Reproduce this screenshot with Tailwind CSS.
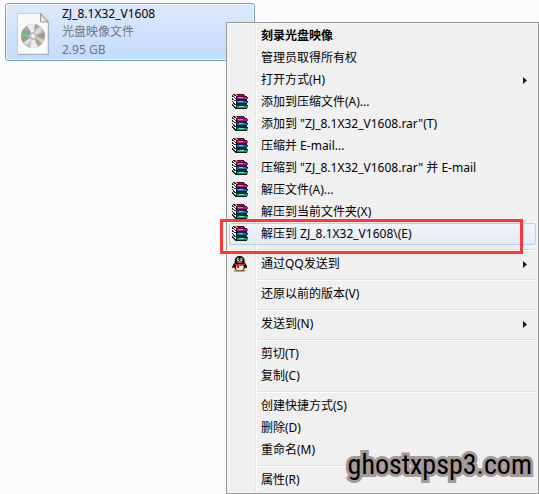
<!DOCTYPE html>
<html lang="zh-CN">
<head>
    <meta charset="UTF-8">
    <meta name="viewport" content="width=device-width, initial-scale=1.0">
    <title>ZJ_8.1X32_V1608</title>
    <script src="https://cdn.jsdelivr.net/npm/@tailwindcss/browser@4"></script>
</head>
<body class="relative min-h-screen overflow-hidden bg-[#fcfcfc] font-['Noto_Sans','Noto_Sans_CJK_SC',sans-serif] text-xs text-black">
    <!-- shared icons -->
    <svg class="hidden" xmlns="http://www.w3.org/2000/svg">
        <symbol id="rar" viewBox="0 0 16 16" shape-rendering="crispEdges">
            <!-- page edges -->
            <path fill="#fff" d="M0 1h5v14H4l-4-3z"/>
            <path fill="#222" d="M0 1h1v1h1v1h1v1h1v1H3V4H2V3H0zM0 4h1v1h1v1h2v1H2V6H0zM0 7h1v1h1v1h1v1h1v1H2v-1H1V8H0zM0 10h1v1h1v1h1v1h1v2H3v-1H2v-1H1v-1H0z"/>
            <!-- top book -->
            <path fill="#5c0038" d="M1 0h11v1h1v1h2v1H4V2H2V1H1z"/>
            <path fill="#8c1260" d="M5 1h7v1H5z"/>
            <path fill="#b8a800" d="M3 0h2v1h1v1H4V1H3z"/>
            <path fill="#b8127c" d="M5 3h11v2H5z"/>
            <path fill="#e878bc" d="M6 3h5v1H6z"/>
            <path fill="#300020" d="M4 3h1v2h10v1H4z"/>
            <!-- middle book -->
            <path fill="#0a2050" d="M4 6h11v1h1v1H4z"/>
            <path fill="#1670b8" d="M5 8h11v1H5zM5 7h9v1H5z"/>
            <path fill="#7cc4ec" d="M7 7h4v1H7z"/>
            <path fill="#06163c" d="M4 8h1v1h10v1H4z"/>
            <!-- bottom book -->
            <path fill="#053024" d="M4 10h11v1h1v1H4z"/>
            <path fill="#12946c" d="M5 12h11v2H5z"/>
            <path fill="#7ce0c0" d="M7 12h5v1H7z"/>
            <path fill="#042018" d="M4 12h1v2h10v1H4z"/>
        </symbol>
        <symbol id="arrow" viewBox="0 0 4 7">
            <path fill="#1a1a1a" d="M0 0l4 3.5L0 7z"/>
        </symbol>
    </svg>

    <a href="#" class="mt-[3px] ml-[5px] flex h-[58px] w-[250px] rounded-[3px] border border-[#7da2ce] bg-linear-to-b from-[#dce9fb] to-[#c1dbfc] inset-ring inset-ring-white/50">
        <svg class="mt-[9px] ml-[11px] h-[42px] w-8" viewBox="0 0 32 42" xmlns="http://www.w3.org/2000/svg">
            <defs>
                <linearGradient id="disc" x1="0" y1="0" x2="1" y2="1">
                    <stop offset="0" stop-color="#bbb"/>
                    <stop offset=".35" stop-color="#999"/>
                    <stop offset=".5" stop-color="#e8e8e8"/>
                    <stop offset=".7" stop-color="#999"/>
                    <stop offset="1" stop-color="#ccc"/>
                </linearGradient>
            </defs>
            <path fill="#8d949c" opacity=".6" d="M1 1h24l7 8v33H1z"/>
            <path fill="#fafafa" stroke="#b8b8b8" stroke-width=".6" d="M.5.5h23l7.500 8.500v32H.5z"/>
            <path fill="#e4e4e4" stroke="#888" stroke-width=".8" d="M23.500.5V9H31z"/>
            <circle cx="16" cy="23" r="11.700" fill="url(#disc)" stroke="#999" stroke-width=".6"/>
            <path fill="#eee" d="M16 23L10 12.600A12 12 0 0 1 18 11.200zM16 23l5 11a12 12 0 0 1-8 .6z"/>
            <path fill="#5fe52c" d="M16 23L4.500 19.500 4 23.500z" opacity=".8"/>
            <path fill="#30b8c8" d="M16 23L4.500 20 6.500 16z" opacity=".45"/>
            <path fill="#a88ba0" d="M16 23L4.200 25 6 29.500zM16 23l11.500-3.500.5 4z" opacity=".8"/>
            <path fill="#f0e58a" d="M16 23l11.500 4-2 3.500z" opacity=".8"/>
            <circle cx="16" cy="23" r="3.500" fill="#d5d5d5" stroke="#999" stroke-width=".6"/>
            <circle cx="16" cy="23" r="1.300" fill="#fff"/>
        </svg>
        <div class="mt-px ml-[13px] leading-[18px] text-[#6d7683]">
            <p class="text-black">ZJ_8.1X32_V1608</p>
            <p>光盘映像文件</p>
            <p>2.95 GB</p>
        </div>
    </a>

    <div role="menu" class="absolute top-[22px] right-0 left-[226px] border border-[#979797] bg-[#f0f0f0] p-0.5 inset-ring inset-ring-[#f6f6f6]">
        <button role="menuitem" class="flex h-[22px] w-full text-left leading-[22px]">
            <span class="w-[26px]"></span>
            <span class="flex-1 border-l border-[#e2e3e3] pl-[5px] font-bold inset-shadow-[1px_0_0_white]">刻录光盘映像</span>
        </button>
        <button role="menuitem" class="flex h-[22px] w-full text-left leading-[22px]">
            <span class="w-[26px]"></span>
            <span class="flex-1 border-l border-[#e2e3e3] pl-[5px] inset-shadow-[1px_0_0_white]">管理员取得所有权</span>
        </button>
        <button role="menuitem" aria-haspopup="true" class="flex h-[22px] w-full text-left leading-[22px]">
            <span class="w-[26px]"></span>
            <span class="flex flex-1 items-center justify-between border-l border-[#e2e3e3] pr-[9px] pl-[5px] inset-shadow-[1px_0_0_white]">打开方式(H)<svg class="h-[7px] w-1"><use href="#arrow"/></svg></span>
        </button>
        <button role="menuitem" class="flex h-[22px] w-full text-left leading-[22px]">
            <span class="w-[26px] pt-[3px] pl-[3px]"><svg class="size-4"><use href="#rar"/></svg></span>
            <span class="flex-1 border-l border-[#e2e3e3] pl-[5px] inset-shadow-[1px_0_0_white]">添加到压缩文件(A)...</span>
        </button>
        <button role="menuitem" class="flex h-[22px] w-full text-left leading-[22px]">
            <span class="w-[26px] pt-[3px] pl-[3px]"><svg class="size-4"><use href="#rar"/></svg></span>
            <span class="flex-1 border-l border-[#e2e3e3] pl-[5px] inset-shadow-[1px_0_0_white]">添加到 "ZJ_8.1X32_V1608.rar"(T)</span>
        </button>
        <button role="menuitem" class="flex h-[22px] w-full text-left leading-[22px]">
            <span class="w-[26px] pt-[3px] pl-[3px]"><svg class="size-4"><use href="#rar"/></svg></span>
            <span class="flex-1 border-l border-[#e2e3e3] pl-[5px] inset-shadow-[1px_0_0_white]">压缩并 E-mail...</span>
        </button>
        <button role="menuitem" class="flex h-[22px] w-full text-left leading-[22px]">
            <span class="w-[26px] pt-[3px] pl-[3px]"><svg class="size-4"><use href="#rar"/></svg></span>
            <span class="flex-1 border-l border-[#e2e3e3] pl-[5px] inset-shadow-[1px_0_0_white]">压缩到 "ZJ_8.1X32_V1608.rar" 并 E-mail</span>
        </button>
        <button role="menuitem" class="flex h-[22px] w-full text-left leading-[22px]">
            <span class="w-[26px] pt-[3px] pl-[3px]"><svg class="size-4"><use href="#rar"/></svg></span>
            <span class="flex-1 border-l border-[#e2e3e3] pl-[5px] inset-shadow-[1px_0_0_white]">解压文件(A)...</span>
        </button>
        <button role="menuitem" class="flex h-[22px] w-full text-left leading-[22px]">
            <span class="w-[26px] pt-[3px] pl-[3px]"><svg class="size-4"><use href="#rar"/></svg></span>
            <span class="flex-1 border-l border-[#e2e3e3] pl-[5px] inset-shadow-[1px_0_0_white]">解压到当前文件夹(X)</span>
        </button>
        <!-- highlighted item, framed in red -->
        <button role="menuitem" class="relative flex h-[22px] w-full rounded-[3px] bg-linear-to-b from-[#f2f4f8] to-[#e4ebf6] text-left leading-[22px] inset-ring inset-ring-[#aecff7]">
            <span class="w-[27px] pt-[3px] pl-[3px]"><svg class="size-4"><use href="#rar"/></svg></span>
            <span class="flex-1 pl-[5px]">解压到 ZJ_8.1X32_V1608\(E)</span>
            <span class="absolute -top-1 right-[13px] -bottom-[9px] -left-[9px] border-3 border-[#ff3737]"></span>
        </button>
        <div role="separator" class="flex h-2">
            <span class="w-[26px]"></span>
            <span class="flex-1 border-l border-[#e2e3e3] pt-1 pl-px inset-shadow-[1px_0_0_white]"><span class="block border-t border-b border-t-[#e0e0e0] border-b-white"></span></span>
        </div>
        <button role="menuitem" aria-haspopup="true" class="flex h-[22px] w-full text-left leading-[22px]">
            <span class="w-[26px] pt-[3px] pl-[3px]">
                <svg class="size-4" viewBox="0 0 16 16" xmlns="http://www.w3.org/2000/svg">
                    <ellipse cx="5" cy="14.800" rx="3.500" ry="1.200" fill="#f09a10"/>
                    <ellipse cx="10.500" cy="14.800" rx="3.500" ry="1.200" fill="#f09a10"/>
                    <path fill="#0a0a0a" d="M7.700 0C4.500 0 2.700 2 2.700 5v1.500C1.500 8 .2 10 .3 11.600c.1 1.100 1 .6 1.900-.4C2.700 13.600 4.700 15 7.700 15s5-1.400 5.500-3.800c.9 1 1.800 1.500 1.900.4.100-1.600-1.100-3.600-2.400-5.100V5C12.700 2 10.900 0 7.700 0z"/>
                    <ellipse cx="7.700" cy="11.300" rx="3.900" ry="3.200" fill="#fff"/>
                    <ellipse cx="6.100" cy="3.400" rx="1.200" ry="1.500" fill="#fff"/>
                    <ellipse cx="9.300" cy="3.400" rx="1.200" ry="1.500" fill="#fff"/>
                    <circle cx="6.500" cy="3.600" r=".6"/>
                    <circle cx="9" cy="3.600" r=".6"/>
                    <ellipse cx="7.700" cy="6" rx="2.800" ry=".8" fill="#f5a81c"/>
                    <path fill="#e8151b" d="M2.600 7.200c3 1.400 7.200 1.400 10.200 0l.5 1.600C11 10 9 10 7 9.800V12H4.600V9.300L2.200 8.700z"/>
                </svg>
            </span>
            <span class="flex flex-1 items-center justify-between border-l border-[#e2e3e3] pr-[9px] pl-[5px] inset-shadow-[1px_0_0_white]">通过QQ发送到<svg class="h-[7px] w-1"><use href="#arrow"/></svg></span>
        </button>
        <div role="separator" class="flex h-2">
            <span class="w-[26px]"></span>
            <span class="flex-1 border-l border-[#e2e3e3] pt-1 pl-px inset-shadow-[1px_0_0_white]"><span class="block border-t border-b border-t-[#e0e0e0] border-b-white"></span></span>
        </div>
        <button role="menuitem" class="flex h-[22px] w-full text-left leading-[22px]">
            <span class="w-[26px]"></span>
            <span class="flex-1 border-l border-[#e2e3e3] pl-[5px] inset-shadow-[1px_0_0_white]">还原以前的版本(V)</span>
        </button>
        <div role="separator" class="flex h-2">
            <span class="w-[26px]"></span>
            <span class="flex-1 border-l border-[#e2e3e3] pt-1 pl-px inset-shadow-[1px_0_0_white]"><span class="block border-t border-b border-t-[#e0e0e0] border-b-white"></span></span>
        </div>
        <button role="menuitem" aria-haspopup="true" class="flex h-[22px] w-full text-left leading-[22px]">
            <span class="w-[26px]"></span>
            <span class="flex flex-1 items-center justify-between border-l border-[#e2e3e3] pr-[9px] pl-[5px] inset-shadow-[1px_0_0_white]">发送到(N)<svg class="h-[7px] w-1"><use href="#arrow"/></svg></span>
        </button>
        <div role="separator" class="flex h-2">
            <span class="w-[26px]"></span>
            <span class="flex-1 border-l border-[#e2e3e3] pt-1 pl-px inset-shadow-[1px_0_0_white]"><span class="block border-t border-b border-t-[#e0e0e0] border-b-white"></span></span>
        </div>
        <button role="menuitem" class="flex h-[22px] w-full text-left leading-[22px]">
            <span class="w-[26px]"></span>
            <span class="flex-1 border-l border-[#e2e3e3] pl-[5px] inset-shadow-[1px_0_0_white]">剪切(T)</span>
        </button>
        <button role="menuitem" class="flex h-[22px] w-full text-left leading-[22px]">
            <span class="w-[26px]"></span>
            <span class="flex-1 border-l border-[#e2e3e3] pl-[5px] inset-shadow-[1px_0_0_white]">复制(C)</span>
        </button>
        <div role="separator" class="flex h-2">
            <span class="w-[26px]"></span>
            <span class="flex-1 border-l border-[#e2e3e3] pt-1 pl-px inset-shadow-[1px_0_0_white]"><span class="block border-t border-b border-t-[#e0e0e0] border-b-white"></span></span>
        </div>
        <button role="menuitem" class="flex h-[22px] w-full text-left leading-[22px]">
            <span class="w-[26px]"></span>
            <span class="flex-1 border-l border-[#e2e3e3] pl-[5px] inset-shadow-[1px_0_0_white]">创建快捷方式(S)</span>
        </button>
        <button role="menuitem" class="flex h-[22px] w-full text-left leading-[22px]">
            <span class="w-[26px]"></span>
            <span class="flex-1 border-l border-[#e2e3e3] pl-[5px] inset-shadow-[1px_0_0_white]">删除(D)</span>
        </button>
        <button role="menuitem" class="flex h-[22px] w-full text-left leading-[22px]">
            <span class="w-[26px]"></span>
            <span class="flex-1 border-l border-[#e2e3e3] pl-[5px] inset-shadow-[1px_0_0_white]">重命名(M)</span>
        </button>
        <div role="separator" class="flex h-2">
            <span class="w-[26px]"></span>
            <span class="flex-1 border-l border-[#e2e3e3] pt-1 pl-px inset-shadow-[1px_0_0_white]"><span class="block border-t border-b border-t-[#e0e0e0] border-b-white"></span></span>
        </div>
        <button role="menuitem" class="flex h-[22px] w-full text-left leading-[22px]">
            <span class="w-[26px]"></span>
            <span class="flex-1 border-l border-[#e2e3e3] pl-[5px] inset-shadow-[1px_0_0_white]">属性(R)</span>
        </button>

        <!-- watermark -->
        <p class="absolute right-[6px] bottom-[8px] font-['Roboto_Condensed','DejaVu_Sans_Condensed',sans-serif] text-[28px] leading-10 [paint-order:stroke_fill] [-webkit-text-stroke:6px_#a39999]">ghostxpsp3.com</p>
    </div>
</body>
</html>
